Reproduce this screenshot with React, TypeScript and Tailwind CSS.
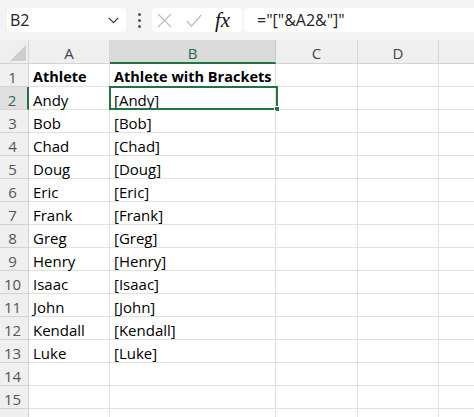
import React from "react";

const names = ["Andy","Bob","Chad","Doug","Eric","Frank","Greg","Henry","Isaac","John","Kendall","Luke"];

const cols = ["A","B","C","D",""];

function Cell({ children, bold, extra }: { children?: React.ReactNode; bold?: boolean; extra?: string }) {
  return (
    <div className={"h-[23px] border-b border-r border-[#e1e1e1] pl-[4px] pt-[3px] leading-[20px] text-black whitespace-nowrap overflow-visible " + (bold ? "font-bold text-[14.5px] " : "text-[15px] ") + (extra ?? "")}>
      {children}
    </div>
  );
}

export default function App() {
  const rows = Array.from({ length: 16 }, (_, i) => i + 1);
  return (
    <div className="w-[474px] h-[417px] overflow-hidden bg-white font-['Open_Sans',sans-serif]">
      {/* top bar */}
      <div className="h-[40px] bg-[#f3f3f3] flex items-start pt-[8px] overflow-hidden">
        <div className="ml-[7px] w-[119px] h-[24px] shrink-0 bg-white rounded-[4px] flex items-center justify-between pl-[3px] pr-[7px]">
          <span className="text-[16px] leading-[20px] text-[#222]">B2</span>
          <svg width="11" height="7" viewBox="0 0 11 7" fill="none">
            <path d="M0.8 0.8 L5.5 5.6 L10.2 0.8" stroke="#333" strokeWidth="1.2" />
          </svg>
        </div>
        <div className="w-[26px] h-[24px] shrink-0 flex flex-col items-center justify-center gap-[3px]">
          <div className="w-[3px] h-[3px] rounded-full bg-[#555]" />
          <div className="w-[3px] h-[3px] rounded-full bg-[#555]" />
          <div className="w-[3px] h-[3px] rounded-full bg-[#555]" />
        </div>
        <div className="w-[90px] h-[24px] shrink-0 bg-white rounded-[4px] flex items-center pl-[5px]">
          <svg width="15" height="15" viewBox="0 0 15 15" fill="none">
            <path d="M1 1 L14 14 M14 1 L1 14" stroke="#bdbdbd" strokeWidth="1.2" />
          </svg>
          <svg className="ml-[14px]" width="16" height="13" viewBox="0 0 16 13" fill="none">
            <path d="M0.8 7 L5.5 12 L15.2 1" stroke="#bdbdbd" strokeWidth="1.2" />
          </svg>
          <span className="ml-[13px] font-['Liberation_Serif',serif] italic text-[21px] leading-[20px] text-[#111]">fx</span>
        </div>
        <div className="ml-[2px] w-[260px] h-[24px] shrink-0 bg-white rounded-[4px] flex items-center pl-[13px]">
          <span className="text-[16px] leading-[20px] text-[#222] whitespace-pre">="["&amp;A2&amp;"]"</span>
        </div>
      </div>

      {/* grid */}
      <div className="w-[520px] grid grid-cols-[29px_81px_166px_82px_81px_81px]">
        {/* header row */}
        <div className="h-[24px] bg-[#efefef] border-r border-b border-[#d4d4d4] relative">
          <svg className="absolute right-[2px] bottom-[2px]" width="16" height="16" viewBox="0 0 16 16">
            <polygon points="16,0 16,16 0,16" fill="#cdcdcd" />
          </svg>
        </div>
        {cols.map((c, i) => (
          <div
            key={i}
            className={
              "h-[24px] pt-[3px] leading-[20px] text-[15px] text-center " +
              (c === "B"
                ? "bg-[#dadada] text-[#1e6e42] border-b-2 border-[#217346] border-r border-r-[#c8c8c8]"
                : "bg-[#efefef] text-[#444] border-b border-r border-[#d4d4d4]")
            }
          >
            {c}
          </div>
        ))}

        {rows.map((r) => {
          const name = r === 1 ? "Athlete" : names[r - 2];
          const br = r === 1 ? "Athlete with Brackets" : name ? `[${name}]` : "";
          const isSel = r === 2;
          return (
            <React.Fragment key={r}>
              <div
                className={
                  "h-[23px] pt-[3px] leading-[20px] text-[15px] text-center pr-[3px] border-b " +
                  (isSel
                    ? "bg-[#e0e0e0] text-[#2f6b4a] border-r-2 border-r-[#217346] border-b-[#d4d4d4]"
                    : "bg-[#efefef] text-[#555] border-r border-[#d4d4d4]")
                }
              >
                {r}
              </div>
              <Cell bold={r === 1}>{name}</Cell>
              <div className="relative">
                <Cell bold={r === 1}>{br}</Cell>
                {isSel && (
                  <div className="absolute left-[-1px] top-[-1px] right-[-2px] bottom-0 border-2 border-[#217346]">
                    <div className="absolute right-[-4px] bottom-[-4px] w-[6px] h-[6px] bg-[#217346] border border-white" />
                  </div>
                )}
              </div>
              <Cell />
              <Cell />
              <Cell />
            </React.Fragment>
          );
        })}
      </div>
    </div>
  );
}
